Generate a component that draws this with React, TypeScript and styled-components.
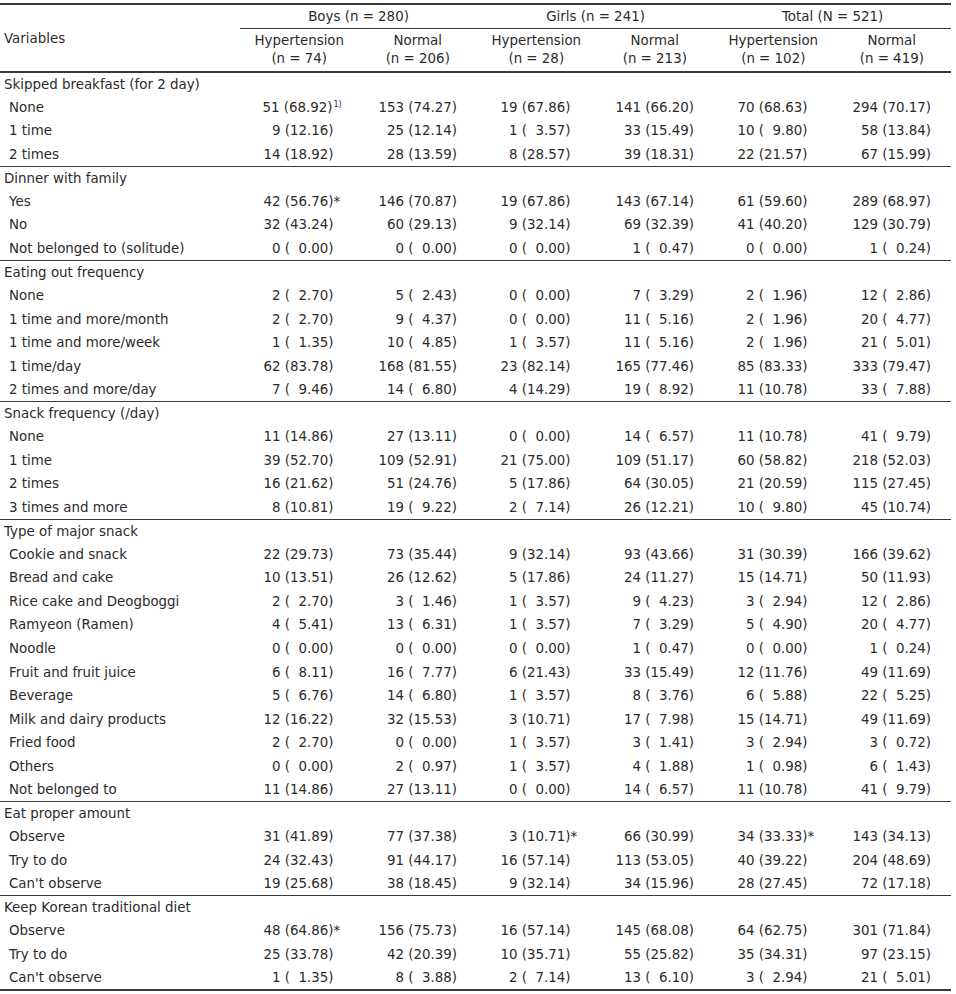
import React from 'react'
import styled, { createGlobalStyle } from 'styled-components'

const GlobalStyle = createGlobalStyle`
  html, body {
    margin: 0;
    padding: 0;
    background: #ffffff;
  }
  body {
    font-family: "DejaVu Sans", "Liberation Sans", sans-serif;
    color: #2b2b2b;
  }
`

const FIG = '\u2007'

type Group = { title: string; rows: [string, string[]][] }

// cell format: "n pct" with optional trailing mark: "*" or "^" (footnote 1))
const GROUPS: Group[] = [
  {
    title: 'Skipped breakfast (for 2 day)',
    rows: [
      ['None', ['51 68.92^', '153 74.27', '19 67.86', '141 66.20', '70 68.63', '294 70.17']],
      ['1 time', ['9 12.16', '25 12.14', '1 3.57', '33 15.49', '10 9.80', '58 13.84']],
      ['2 times', ['14 18.92', '28 13.59', '8 28.57', '39 18.31', '22 21.57', '67 15.99']],
    ],
  },
  {
    title: 'Dinner with family',
    rows: [
      ['Yes', ['42 56.76*', '146 70.87', '19 67.86', '143 67.14', '61 59.60', '289 68.97']],
      ['No', ['32 43.24', '60 29.13', '9 32.14', '69 32.39', '41 40.20', '129 30.79']],
      ['Not belonged to (solitude)', ['0 0.00', '0 0.00', '0 0.00', '1 0.47', '0 0.00', '1 0.24']],
    ],
  },
  {
    title: 'Eating out frequency',
    rows: [
      ['None', ['2 2.70', '5 2.43', '0 0.00', '7 3.29', '2 1.96', '12 2.86']],
      ['1 time and more/month', ['2 2.70', '9 4.37', '0 0.00', '11 5.16', '2 1.96', '20 4.77']],
      ['1 time and more/week', ['1 1.35', '10 4.85', '1 3.57', '11 5.16', '2 1.96', '21 5.01']],
      ['1 time/day', ['62 83.78', '168 81.55', '23 82.14', '165 77.46', '85 83.33', '333 79.47']],
      ['2 times and more/day', ['7 9.46', '14 6.80', '4 14.29', '19 8.92', '11 10.78', '33 7.88']],
    ],
  },
  {
    title: 'Snack frequency (/day)',
    rows: [
      ['None', ['11 14.86', '27 13.11', '0 0.00', '14 6.57', '11 10.78', '41 9.79']],
      ['1 time', ['39 52.70', '109 52.91', '21 75.00', '109 51.17', '60 58.82', '218 52.03']],
      ['2 times', ['16 21.62', '51 24.76', '5 17.86', '64 30.05', '21 20.59', '115 27.45']],
      ['3 times and more', ['8 10.81', '19 9.22', '2 7.14', '26 12.21', '10 9.80', '45 10.74']],
    ],
  },
  {
    title: 'Type of major snack',
    rows: [
      ['Cookie and snack', ['22 29.73', '73 35.44', '9 32.14', '93 43.66', '31 30.39', '166 39.62']],
      ['Bread and cake', ['10 13.51', '26 12.62', '5 17.86', '24 11.27', '15 14.71', '50 11.93']],
      ['Rice cake and Deogboggi', ['2 2.70', '3 1.46', '1 3.57', '9 4.23', '3 2.94', '12 2.86']],
      ['Ramyeon (Ramen)', ['4 5.41', '13 6.31', '1 3.57', '7 3.29', '5 4.90', '20 4.77']],
      ['Noodle', ['0 0.00', '0 0.00', '0 0.00', '1 0.47', '0 0.00', '1 0.24']],
      ['Fruit and fruit juice', ['6 8.11', '16 7.77', '6 21.43', '33 15.49', '12 11.76', '49 11.69']],
      ['Beverage', ['5 6.76', '14 6.80', '1 3.57', '8 3.76', '6 5.88', '22 5.25']],
      ['Milk and dairy products', ['12 16.22', '32 15.53', '3 10.71', '17 7.98', '15 14.71', '49 11.69']],
      ['Fried food', ['2 2.70', '0 0.00', '1 3.57', '3 1.41', '3 2.94', '3 0.72']],
      ['Others', ['0 0.00', '2 0.97', '1 3.57', '4 1.88', '1 0.98', '6 1.43']],
      ['Not belonged to', ['11 14.86', '27 13.11', '0 0.00', '14 6.57', '11 10.78', '41 9.79']],
    ],
  },
  {
    title: 'Eat proper amount',
    rows: [
      ['Observe', ['31 41.89', '77 37.38', '3 10.71*', '66 30.99', '34 33.33*', '143 34.13']],
      ['Try to do', ['24 32.43', '91 44.17', '16 57.14', '113 53.05', '40 39.22', '204 48.69']],
      ["Can't observe", ['19 25.68', '38 18.45', '9 32.14', '34 15.96', '28 27.45', '72 17.18']],
    ],
  },
  {
    title: 'Keep Korean traditional diet',
    rows: [
      ['Observe', ['48 64.86*', '156 75.73', '16 57.14', '145 68.08', '64 62.75', '301 71.84']],
      ['Try to do', ['25 33.78', '42 20.39', '10 35.71', '55 25.82', '35 34.31', '97 23.15']],
      ["Can't observe", ['1 1.35', '8 3.88', '2 7.14', '13 6.10', '3 2.94', '21 5.01']],
    ],
  },
]

const HEAD_GROUPS = ['Boys (n = 280)', 'Girls (n = 241)', 'Total (N = 521)']
const HEAD_SUBS: [string, string][] = [
  ['Hypertension', '(n = 74)'],
  ['Normal', '(n = 206)'],
  ['Hypertension', '(n = 28)'],
  ['Normal', '(n = 213)'],
  ['Hypertension', '(n = 102)'],
  ['Normal', '(n = 419)'],
]

const Value: React.FC<{ raw: string }> = ({ raw }) => {
  let text = raw
  let mark: string | null = null
  if (text.endsWith('*')) {
    mark = '*'
    text = text.slice(0, -1)
  } else if (text.endsWith('^')) {
    mark = '1)'
    text = text.slice(0, -1)
  }
  const [n, pct] = text.split(' ')
  const padded = pct.length < 5 ? FIG + pct : pct
  return (
    <>
      {n} ({padded})
      {mark === '*' && <Star>*</Star>}
      {mark === '1)' && <Sup>1)</Sup>}
    </>
  )
}

export default function App() {
  return (
    <Page>
      <GlobalStyle />
      <Table>
        <colgroup>
          <col style={{ width: 240 }} />
          {HEAD_SUBS.map((_, i) => (
            <col key={i} style={{ width: 118.5 }} />
          ))}
        </colgroup>
        <thead>
          <tr>
            <VarHead rowSpan={2}>Variables</VarHead>
            {HEAD_GROUPS.map((g) => (
              <GroupHead key={g} colSpan={2}>
                {g}
              </GroupHead>
            ))}
          </tr>
          <tr>
            {HEAD_SUBS.map(([a, b], i) => (
              <SubHead key={i}>
                {a}
                <br />
                {b}
              </SubHead>
            ))}
          </tr>
        </thead>
        {GROUPS.map((g, gi) => (
          <Body key={g.title} $first={gi === 0}>
            <tr>
              <CatCell colSpan={7}>{g.title}</CatCell>
            </tr>
            {g.rows.map(([label, vals], ri) => (
              <tr key={ri}>
                <ItemCell>{label}</ItemCell>
                {vals.map((v, vi) => (
                  <NumCell key={vi} $normal={vi % 2 === 1}>
                    <Value raw={v} />
                  </NumCell>
                ))}
              </tr>
            ))}
          </Body>
        ))}
      </Table>
    </Page>
  )
}

const Page = styled.div`
  width: 956px;
  padding-top: 3px;
`

const Table = styled.table`
  width: 951px;
  border-collapse: collapse;
  table-layout: fixed;
  font-size: 13.4px;
  border-bottom: 2px solid #3a3a3a;
  border-top: 2px solid #3a3a3a;
`

const VarHead = styled.th`
  text-align: left;
  font-weight: normal;
  padding: 0 0 0 4px;
  vertical-align: middle;
  border-bottom: 2px solid #3a3a3a;
`

const GroupHead = styled.th`
  font-weight: normal;
  height: 23px;
  padding: 0;
  text-align: center;
  vertical-align: middle;
  border-bottom: 1.5px solid #3a3a3a;
`

const SubHead = styled.th`
  font-weight: normal;
  height: 42px;
  padding: 0;
  line-height: 18px;
  text-align: center;
  vertical-align: middle;
  border-bottom: 2px solid #3a3a3a;
`

const Body = styled.tbody<{ $first: boolean }>`
  border-top: ${(p) => (p.$first ? 'none' : '1.5px solid #3a3a3a')};

  tr {
    height: 23.54px;
  }
`

const CatCell = styled.td`
  padding: 0 0 0 4px;
  white-space: nowrap;
  vertical-align: middle;
`

const ItemCell = styled.td`
  padding: 0 0 0 9px;
  white-space: nowrap;
  vertical-align: middle;
`

const NumCell = styled.td<{ $normal: boolean }>`
  text-align: right;
  white-space: nowrap;
  vertical-align: middle;
  padding: 0 ${(p) => (p.$normal ? '20px' : '25px')} 0 0;
`

const Star = styled.span`
  display: inline-block;
  width: 0;
  overflow: visible;
`

const Sup = styled.span`
  display: inline-block;
  width: 0;
  font-size: 8px;
  vertical-align: 5px;
  padding-left: 1px;
`
